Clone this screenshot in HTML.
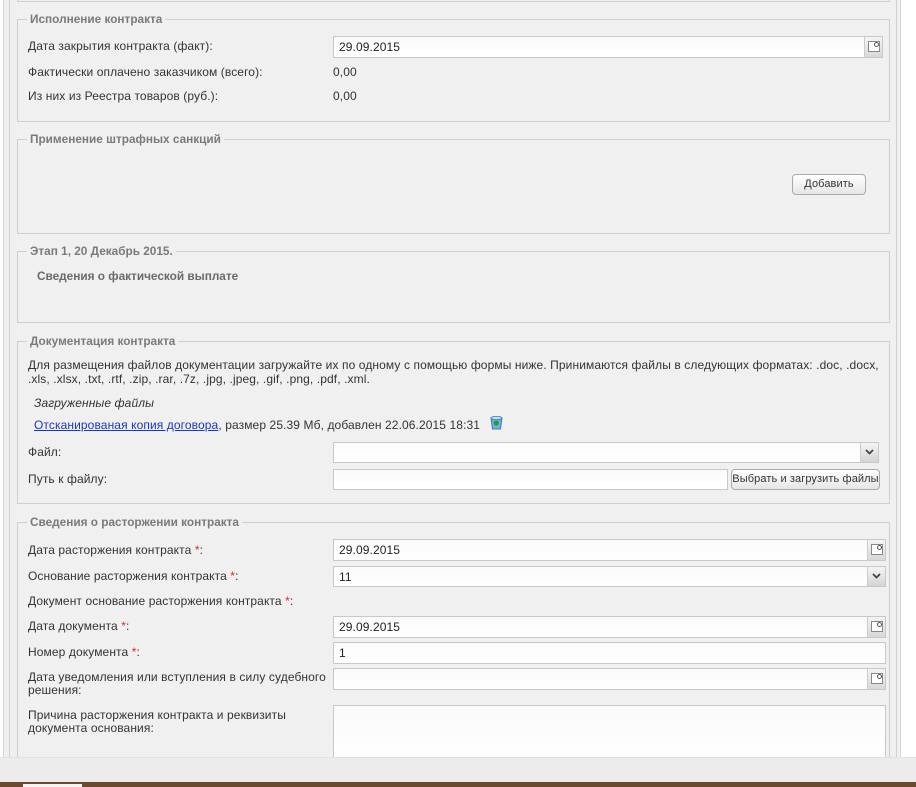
<!DOCTYPE html>
<html><head><meta charset="utf-8"><style>
*{margin:0;padding:0;box-sizing:border-box}
body{width:916px;height:787px;position:relative;overflow:hidden;background:#fff;font-family:"Liberation Sans","DejaVu Sans",sans-serif;font-size:12px;color:#333;letter-spacing:0.1px}
.a{position:absolute;white-space:nowrap}
.bg{position:absolute;left:3px;top:0;width:898px;height:757px;background:#f0f0f0;border-left:1px solid #d4d4d4;border-right:1px solid #d4d4d4}
.vl{position:absolute;top:0;height:757px;width:1px;background:#d0d0d0}
.fs{position:absolute;left:17px;width:873px;border:1px solid #cfcfcf}
.lg{position:absolute;background:#f0f0f0;font-weight:bold;font-size:11.8px;color:#7a7a7a;padding:0 3px;left:9px;top:-8px;line-height:14px;letter-spacing:0}
.in{position:absolute;background:#fff;border:1px solid #c8c8c8;height:22px;padding-left:5px;line-height:20px;font-size:12px;color:#222;background:linear-gradient(#fafafa,#fff)}
.cal{position:absolute;right:0;top:0;width:18px;height:20px;background:linear-gradient(#f4f4f4,#d8d8d8);border-left:1px solid #ccc}
.cal:after{content:"";position:absolute;left:3px;top:4px;width:10px;height:9px;border:1px solid #888;background:#fff}
.cal:before{content:"";position:absolute;left:9px;top:5px;width:3px;height:3px;border:1px solid #555;border-radius:50%;z-index:1}
.dd{position:absolute;right:0;top:0;width:18px;height:19px;background:linear-gradient(#f4f4f4,#d4d4d4);border-left:1px solid #ccc}
.dd svg{position:absolute;left:4px;top:6px}
.btn{position:absolute;border:1px solid #aaa;border-radius:4px;background:linear-gradient(#fff,#e6e6e6);text-align:center;font-size:11px;color:#333}
.r{color:#e22}
</style></head><body>
<div class="bg"></div>
<div class="vl" style="left:9px"></div>
<div class="vl" style="left:896px"></div>
<div class="a" style="left:17px;top:1px;width:873px;height:1px;background:#cfcfcf"></div>
<div class="a" style="left:17px;top:0;width:1px;height:2px;background:#cfcfcf"></div>
<div class="a" style="left:889px;top:0;width:1px;height:2px;background:#cfcfcf"></div>

<div class="fs" style="top:19px;height:103px"><div class="lg">Исполнение контракта</div></div>
<div class="a" style="left:28px;top:39px">Дата закрытия контракта (факт):</div>
<div class="in" style="left:333px;top:36px;width:550px">29.09.2015<div class="cal"></div></div>
<div class="a" style="left:28px;top:65px">Фактически оплачено заказчиком (всего):</div>
<div class="a" style="left:333px;top:65px">0,00</div>
<div class="a" style="left:28px;top:89px">Из них из Реестра товаров (руб.):</div>
<div class="a" style="left:333px;top:89px">0,00</div>

<div class="fs" style="top:139px;height:95px"><div class="lg">Применение штрафных санкций</div></div>
<div class="btn" style="left:792px;top:174px;width:74px;height:21px;line-height:19px">Добавить</div>

<div class="fs" style="top:251px;height:72px"><div class="lg">Этап 1, 20 Декабрь 2015.</div></div>
<div class="a" style="left:37px;top:269px;font-weight:bold;font-size:11.8px;color:#6a6a6a;letter-spacing:0">Сведения о фактической выплате</div>

<div class="fs" style="top:341px;height:163px"><div class="lg">Документация контракта</div></div>
<div class="a" style="left:28px;top:358px">Для размещения файлов документации загружайте их по одному с помощью формы ниже. Принимаются файлы в следующих форматах: .doc, .docx,</div>
<div class="a" style="left:28px;top:372px">.xls, .xlsx, .txt, .rtf, .zip, .rar, .7z, .jpg, .jpeg, .gif, .png, .pdf, .xml.</div>
<div class="a" style="left:34px;top:396px;font-style:italic">Загруженные файлы</div>
<div class="a" style="left:34px;top:418px"><span style="color:#1a35c8;text-decoration:underline">Отсканированая копия договора</span>, размер 25.39 Мб, добавлен 22.06.2015 18:31</div>
<svg class="a" style="left:489px;top:415px" width="15" height="15" viewBox="0 0 15 15"><path d="M2 3 L13 3 L11.5 14 L3.5 14 Z" fill="#6ab0e0" stroke="#3a80b8" stroke-width="1"/><ellipse cx="7.5" cy="3" rx="5.5" ry="1.6" fill="#bde0f5" stroke="#3a80b8" stroke-width="0.8"/><circle cx="7.3" cy="8" r="2.6" fill="#2e9a2e"/></svg>
<div class="a" style="left:28px;top:445px">Файл:</div>
<div class="in" style="left:333px;top:442px;width:546px;height:21px"><div class="dd"><svg width="9" height="6" viewBox="0 0 9 6"><path d="M1 1 L4.5 4.5 L8 1" fill="none" stroke="#444" stroke-width="1.8"/></svg></div></div>
<div class="a" style="left:28px;top:472px">Путь к файлу:</div>
<div class="in" style="left:333px;top:469px;width:395px;height:21px"></div>
<div class="btn" style="left:731px;top:469px;width:149px;height:21px;line-height:19px">Выбрать и загрузить файлы</div>

<div class="fs" style="top:522px;height:260px"><div class="lg">Сведения о расторжении контракта</div></div>
<div class="a" style="left:28px;top:543px">Дата расторжения контракта <span class="r">*</span>:</div>
<div class="in" style="left:333px;top:539px;width:553px">29.09.2015<div class="cal"></div></div>
<div class="a" style="left:28px;top:569px">Основание расторжения контракта <span class="r">*</span>:</div>
<div class="in" style="left:333px;top:566px;width:553px;height:21px">11<div class="dd"><svg width="9" height="6" viewBox="0 0 9 6"><path d="M1 1 L4.5 4.5 L8 1" fill="none" stroke="#444" stroke-width="1.8"/></svg></div></div>
<div class="a" style="left:28px;top:594px">Документ основание расторжения контракта <span class="r">*</span>:</div>
<div class="a" style="left:28px;top:619px">Дата документа <span class="r">*</span>:</div>
<div class="in" style="left:333px;top:616px;width:553px">29.09.2015<div class="cal"></div></div>
<div class="a" style="left:28px;top:645px">Номер документа <span class="r">*</span>:</div>
<div class="in" style="left:333px;top:642px;width:553px">1</div>
<div class="a" style="left:28px;top:671px;line-height:13px">Дата уведомления или вступления в силу судебного<br>решения:</div>
<div class="in" style="left:333px;top:668px;width:553px"><div class="cal"></div></div>
<div class="a" style="left:28px;top:709px;line-height:13px">Причина расторжения контракта и реквизиты<br>документа основания:</div>
<div class="in" style="left:333px;top:705px;width:553px;height:60px"></div>

<div class="a" style="left:0;top:757px;width:916px;height:25px;background:#ececec;border-top:1px solid #e2e2e2"></div>
<div class="a" style="left:0;top:782px;width:916px;height:5px;background:#6b4a30"></div>
<div class="a" style="left:23px;top:784px;width:59px;height:3px;background:#f4f4f4"></div>
</body></html>
